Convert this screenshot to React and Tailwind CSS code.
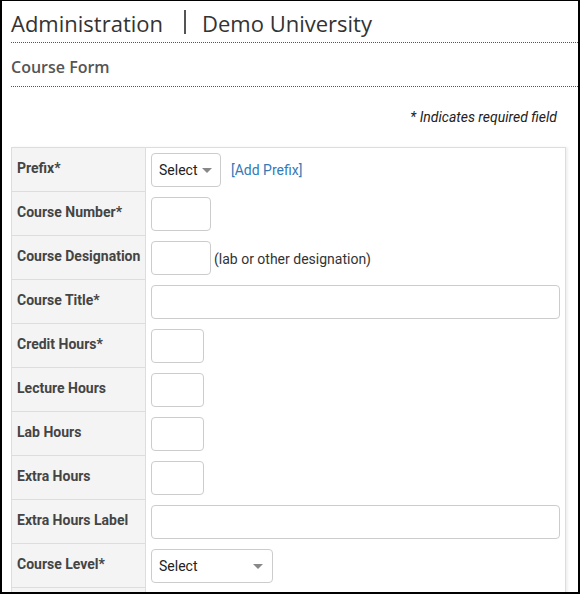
import React from "react";

const rows = [
  { label: "Prefix*", kind: "prefix" },
  { label: "Course Number*", kind: "box", w: "w-[60px]" },
  { label: "Course Designation", kind: "designation" },
  { label: "Course Title*", kind: "wide" },
  { label: "Credit Hours*", kind: "box", w: "w-[53px]" },
  { label: "Lecture Hours", kind: "box", w: "w-[53px]" },
  { label: "Lab Hours", kind: "box", w: "w-[53px]" },
  { label: "Extra Hours", kind: "box", w: "w-[53px]" },
  { label: "Extra Hours Label", kind: "wide" },
  { label: "Course Level*", kind: "level" },
  { label: "", kind: "empty" },
];

function Caret() {
  return <span className="w-0 h-0 border-l-[5px] border-r-[5px] border-t-[5px] border-l-transparent border-r-transparent border-t-[#888]" />;
}

function Field({ row }) {
  const box = "h-[34px] border border-[#ccc] rounded-[4px] bg-white";
  if (row.kind === "prefix")
    return (
      <div className="flex items-center gap-[10px]">
        <div className={`${box} w-[70px] flex items-center justify-between pl-[7px] pr-[8px] text-[14px] text-[#222]`}>
          <span className="pt-[1px]">Select</span>
          <Caret />
        </div>
        <span className="text-[14px] text-[#337ab7]">[Add Prefix]</span>
      </div>
    );
  if (row.kind === "designation")
    return (
      <div className="flex items-center gap-[3px]">
        <div className={`${box} w-[60px]`} />
        <span className="text-[14px] text-[#333] pt-[3px]">(lab or other designation)</span>
      </div>
    );
  if (row.kind === "wide") return <div className={`${box} w-full`} />;
  if (row.kind === "level")
    return (
      <div className={`${box} w-[122px] flex items-center justify-between pl-[7px] pr-[9px] text-[14px] text-[#222]`}>
        <span className="pt-[1px]">Select</span>
        <Caret />
      </div>
    );
  if (row.kind === "empty") return null;
  return <div className={`${box} ${row.w}`} />;
}

export default function App() {
  return (
    <div className="w-[580px] h-[594px] overflow-hidden border-t border-b-2 border-l-2 border-r-2 border-black bg-white" style={{ fontFamily: "Roboto, 'Liberation Sans', sans-serif" }}>
      <div className="pl-[9px]">
        <div className="flex items-center h-[42px] pt-[4px] border-b border-dotted border-[#555] text-[22px] text-[#333]" style={{ fontFamily: "'Open Sans', sans-serif" }}>
          <span>Administration</span>
          <span className="w-[2px] h-[24px] bg-[#555] ml-[21px] mr-[16px] -mt-[3px]" />
          <span>Demo University</span>
        </div>
        <div className="h-[44px] flex items-center pt-[5px] border-b border-dotted border-[#555] text-[16px] font-semibold text-[#555]" style={{ fontFamily: "'Open Sans', sans-serif" }}>
          Course Form
        </div>
        <div className="h-[60px] pr-[21px] pt-[20px] text-right italic text-[14px] text-[#222]">
          * Indicates required field
        </div>
        <div className="mr-[12px] border-t border-l border-r border-[#ddd] shadow-[2px_0_2px_rgba(0,0,0,0.06)]">
          {rows.map((row, i) => (
            <div key={i} className="grid grid-cols-[134px_1fr] h-[44px]">
              <div className="bg-[#f4f4f4] border-r border-b border-[#ddd] pl-[5px] pt-[10px] text-[14px] font-bold text-[#444]">
                {row.label}
              </div>
              <div className="pl-[5px] pr-[5px] pt-[5px]">
                <Field row={row} />
              </div>
            </div>
          ))}
        </div>
      </div>
    </div>
  );
}
